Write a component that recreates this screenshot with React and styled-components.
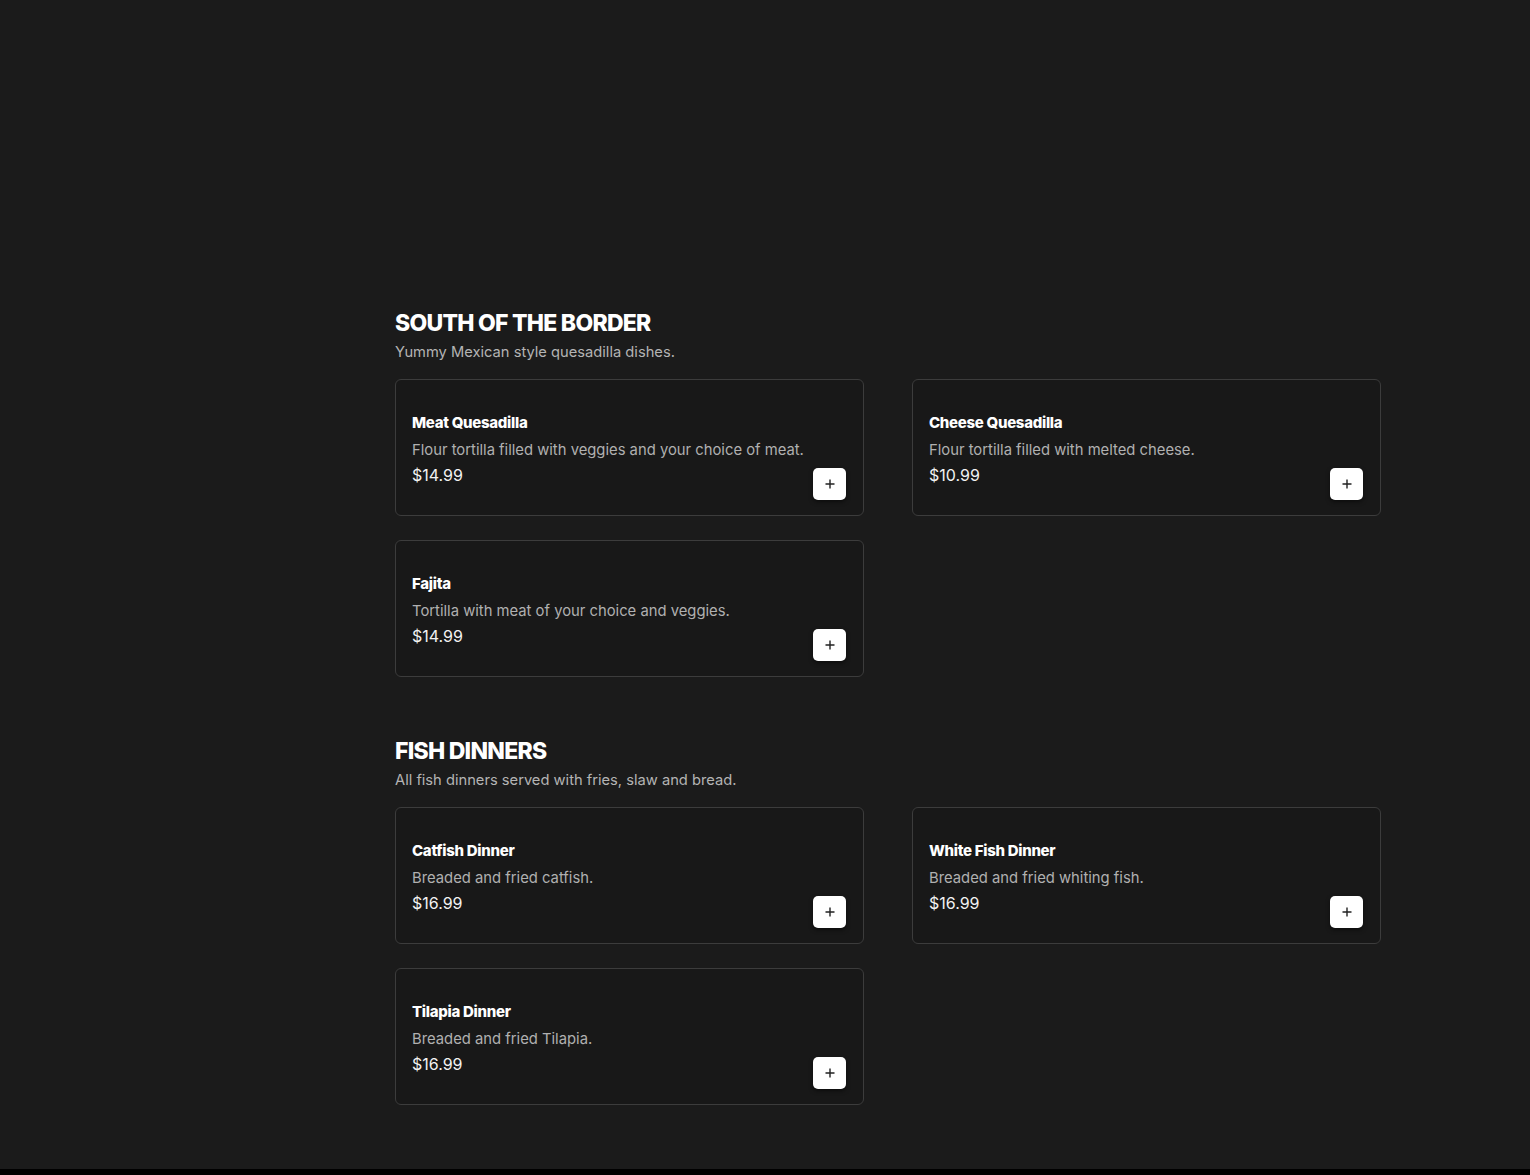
import React from 'react';
import styled, { createGlobalStyle } from 'styled-components';

const Global = createGlobalStyle`
html { background: #000; }
body { margin: 0; font-family: Inter, "Noto Sans", sans-serif; color: #fff; }
`;

const Page = styled.div`
background: #1b1b1b;
padding: 308px 0 64px;
`;

const Menu = styled.main`
width: 986px;
margin: 0 auto 0 395px;
display: flex;
flex-direction: column;
gap: 59px;
`;

const Section = styled.section`
display: flex;
flex-direction: column;
`;

const Heading = styled.h2`
margin: 0;
font-size: 23px;
line-height: 30px;
font-weight: 800;
letter-spacing: -0.75px;
color: #fff;
`;

const Sub = styled.p`
margin: 4px 0 17px;
font-size: 14.7px;
line-height: 20px;
color: #b4b4b4;
`;

const Grid = styled.div`
display: grid;
grid-template-columns: 1fr 1fr;
column-gap: 48px;
row-gap: 24px;
`;

const Card = styled.div`
background: #181818;
border: 1px solid #3c3c3c;
border-radius: 6px;
padding: 33px 16px 15px;
display: flex;
flex-direction: column;
`;

const Title = styled.h3`
margin: 0;
font-size: 15px;
line-height: 20px;
font-weight: 800;
letter-spacing: -0.3px;
color: #fff;
`;

const Desc = styled.p`
margin: 7px 0 0;
font-size: 14.8px;
line-height: 20px;
color: #b0b0b0;
`;

const Row = styled.div`
margin-top: 6px;
display: flex;
justify-content: space-between;
align-items: flex-start;
`;

const Price = styled.span`
font-size: 16px;
line-height: 18px;
color: #f2f2f2;
`;

const AddButton = styled.button`
margin: 2px 1px 0 0;
width: 33px;
height: 32px;
border: none;
border-radius: 5px;
background: #fff;
color: #222;
display: flex;
align-items: center;
justify-content: center;
padding: 0;
box-shadow: 0 2px 4px rgba(0,0,0,0.5);
cursor: pointer;
`;

const Plus = () => (
  <svg width="12" height="12" viewBox="0 0 12 12" fill="none" stroke="#222" strokeWidth="1.4">
    <path d="M6 1.5v9M1.5 6h9" />
  </svg>
);

const sections = [
  {
    name: 'SOUTH OF THE BORDER',
    note: 'Yummy Mexican style quesadilla dishes.',
    items: [
      { title: 'Meat Quesadilla', desc: 'Flour tortilla filled with veggies and your choice of meat.', price: '$14.99' },
      { title: 'Cheese Quesadilla', desc: 'Flour tortilla filled with melted cheese.', price: '$10.99' },
      { title: 'Fajita', desc: 'Tortilla with meat of your choice and veggies.', price: '$14.99' },
    ],
  },
  {
    name: 'FISH DINNERS',
    note: 'All fish dinners served with fries, slaw and bread.',
    items: [
      { title: 'Catfish Dinner', desc: 'Breaded and fried catfish.', price: '$16.99' },
      { title: 'White Fish Dinner', desc: 'Breaded and fried whiting fish.', price: '$16.99' },
      { title: 'Tilapia Dinner', desc: 'Breaded and fried Tilapia.', price: '$16.99' },
    ],
  },
];

const App = () => {
  return (
    <Page>
      <Global />
      <Menu>
        {sections.map((s) => (
          <Section key={s.name}>
            <Heading>{s.name}</Heading>
            <Sub>{s.note}</Sub>
            <Grid>
              {s.items.map((it) => (
                <Card key={it.title}>
                  <Title>{it.title}</Title>
                  <Desc>{it.desc}</Desc>
                  <Row>
                    <Price>{it.price}</Price>
                    <AddButton aria-label="add"><Plus /></AddButton>
                  </Row>
                </Card>
              ))}
            </Grid>
          </Section>
        ))}
      </Menu>
    </Page>
  );
};

export default App;
